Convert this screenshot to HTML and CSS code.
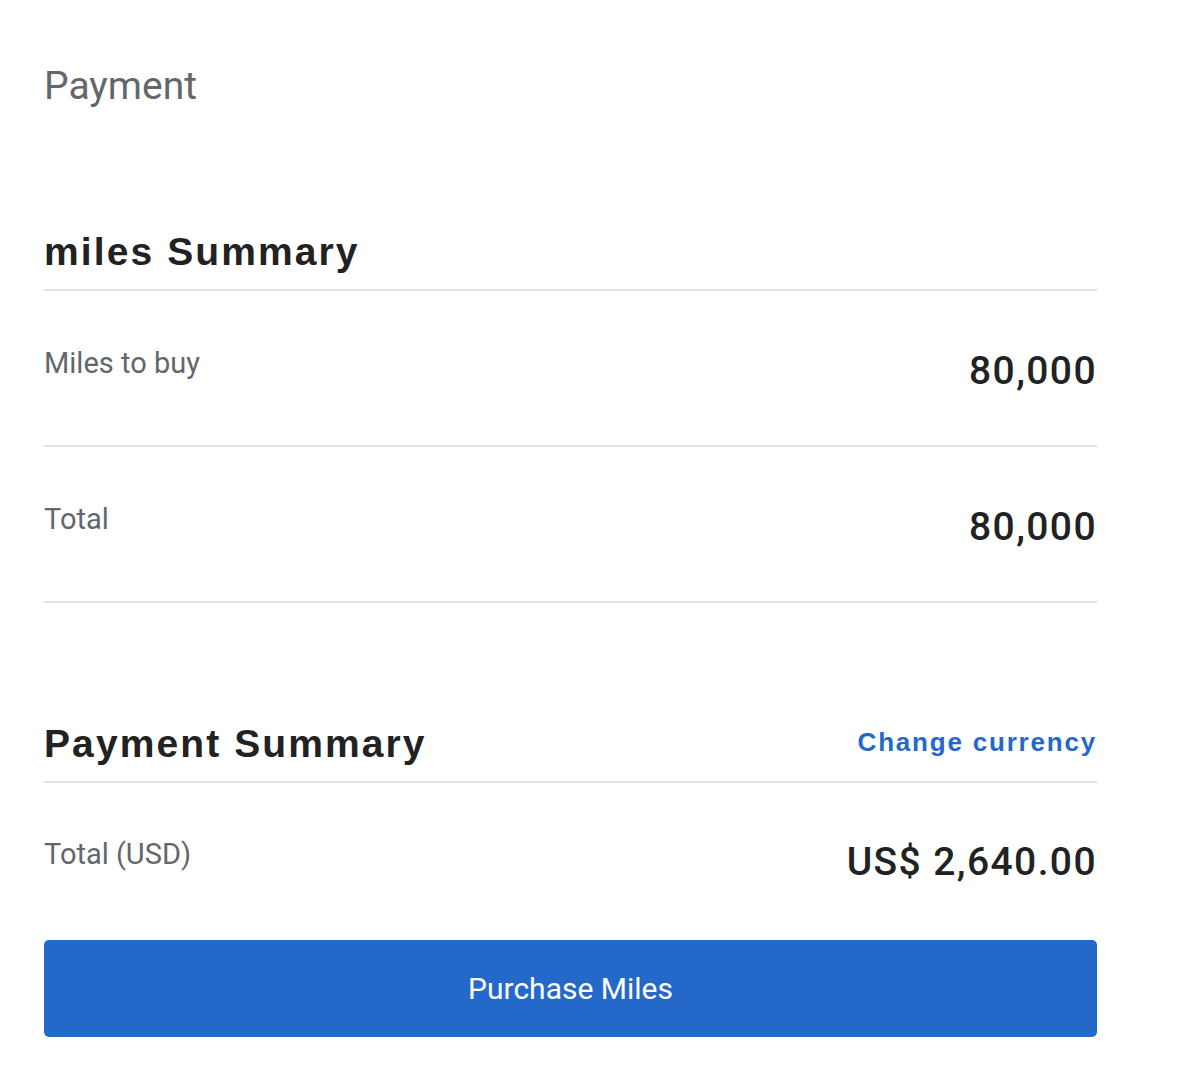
FILE: index.html
```html
<!DOCTYPE html>
<html>
<head>
<meta charset="utf-8">
<link rel="stylesheet" href="styles.css">
</head>
<body>
<main class="page">
  <h1 class="title">Payment</h1>

  <section class="summary miles">
    <div class="head">
      <h2 class="heading">miles Summary</h2>
    </div>
    <div class="row">
      <span class="label">Miles to buy</span>
      <span class="value">80,000</span>
    </div>
    <div class="row">
      <span class="label">Total</span>
      <span class="value">80,000</span>
    </div>
  </section>

  <section class="summary pay">
    <div class="head">
      <h2 class="heading">Payment Summary</h2>
      <a class="link" href="#">Change currency</a>
    </div>
    <div class="row total">
      <span class="label">Total (USD)</span>
      <span class="value">US$ 2,640.00</span>
    </div>
    <button class="btn" type="button">Purchase Miles</button>
  </section>
</main>
</body>
</html>
```

FILE: styles.css
```css
html, body {
  margin: 0;
  padding: 0;
  background: #ffffff;
}
body {
  font-family: Roboto, "Liberation Sans", sans-serif;
  color: #222222;
}
.page {
  width: 1053px;
  padding: 58px 0 0 44px;
}
.title {
  margin: 0;
  font-size: 39px;
  font-weight: 400;
  line-height: 56px;
  color: #63676c;
}
.summary.miles {
  margin-top: 115px;
}
.head {
  display: flex;
  justify-content: space-between;
  align-items: flex-end;
  border-bottom: 2px solid #e2e2e2;
  padding-bottom: 14px;
}
.heading {
  margin: 0;
  font-family: "Liberation Sans", Arial, sans-serif;
  font-weight: 700;
  font-size: 39px;
  letter-spacing: 2.1px;
  line-height: 46px;
  color: #222222;
}
.link {
  font-family: "Liberation Sans", Arial, sans-serif;
  font-weight: 700;
  font-size: 26px;
  letter-spacing: 1.8px;
  color: #2469c9;
  text-decoration: none;
  line-height: 40px;
  padding-bottom: 5px;
}
.row {
  display: flex;
  justify-content: space-between;
  align-items: flex-start;
  height: 156px;
  box-sizing: border-box;
  padding-top: 54px;
  border-bottom: 2px solid #e2e2e2;
}
.label {
  font-size: 29px;
  line-height: 36px;
  color: #63676c;
}
.value {
  font-size: 39px;
  font-weight: 500;
  letter-spacing: 1.4px;
  line-height: 44px;
  margin-top: 4px;
  color: #222222;
}
.summary.pay {
  margin-top: 118px;
}
.row.total {
  height: auto;
  border-bottom: none;
  padding-top: 53px;
  padding-bottom: 0;
}
.btn {
  display: block;
  width: 100%;
  height: 97px;
  margin-top: 56px;
  border: none;
  border-radius: 5px;
  background: #2469c9;
  color: #ffffff;
  font-family: Roboto, "Liberation Sans", sans-serif;
  font-size: 30px;
  font-weight: 400;
  cursor: pointer;
}
```
